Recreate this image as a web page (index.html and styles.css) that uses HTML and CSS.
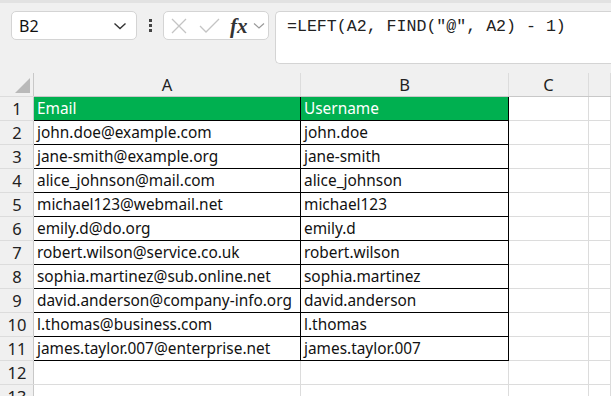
FILE: index.html
```html
<html>
<head>
	<link rel="stylesheet" href="styles.css">
</head>
<body>
	<div class="toolbar">
		<div class="namebox">
			<span>B2</span>
			<svg width="14" height="8" viewBox="0 0 14 8"><path d="M1.5 1.5 L7 6.5 L12.5 1.5" fill="none" stroke="#333" stroke-width="1.4"/></svg>
		</div>
		<div class="dots"><i></i><i></i><i></i></div>
		<div class="fxbox">
			<svg class="ico-x" width="16" height="16" viewBox="0 0 16 16"><path d="M1 1 L15 15 M15 1 L1 15" stroke="#c4c4c4" stroke-width="1.3"/></svg>
			<svg class="ico-ok" width="21" height="16" viewBox="0 0 21 16"><path d="M1 8 L7 14 L20 1" fill="none" stroke="#c4c4c4" stroke-width="1.3"/></svg>
			<span class="fx">fx</span>
			<svg width="12" height="8" viewBox="0 0 12 8"><path d="M1 1.5 L6 6 L11 1.5" fill="none" stroke="#999" stroke-width="1.2"/></svg>
		</div>
		<div class="formula">=LEFT(A2, FIND("@", A2) - 1)</div>
	</div>
	<table class="sheet">
		<colgroup>
			<col class="c-row"><col class="c-a"><col class="c-b"><col class="c-c"><col>
		</colgroup>
		<tr class="heads">
			<th class="corner"><div class="tri"></div></th>
			<th>A</th><th>B</th><th>C</th><th></th>
		</tr>
		<tr class="title"><th>1</th><td class="d">Email</td><td class="d">Username</td><td></td><td></td></tr>
		<tr><th>2</th><td class="d">john.doe@example.com</td><td class="d">john.doe</td><td></td><td></td></tr>
		<tr><th>3</th><td class="d">jane-smith@example.org</td><td class="d">jane-smith</td><td></td><td></td></tr>
		<tr><th>4</th><td class="d">alice_johnson@mail.com</td><td class="d">alice_johnson</td><td></td><td></td></tr>
		<tr><th>5</th><td class="d">michael123@webmail.net</td><td class="d">michael123</td><td></td><td></td></tr>
		<tr><th>6</th><td class="d">emily.d@do.org</td><td class="d">emily.d</td><td></td><td></td></tr>
		<tr><th>7</th><td class="d">robert.wilson@service.co.uk</td><td class="d">robert.wilson</td><td></td><td></td></tr>
		<tr><th>8</th><td class="d">sophia.martinez@sub.online.net</td><td class="d">sophia.martinez</td><td></td><td></td></tr>
		<tr><th>9</th><td class="d">david.anderson@company-info.org</td><td class="d">david.anderson</td><td></td><td></td></tr>
		<tr><th>10</th><td class="d">l.thomas@business.com</td><td class="d">l.thomas</td><td></td><td></td></tr>
		<tr><th>11</th><td class="d">james.taylor.007@enterprise.net</td><td class="d">james.taylor.007</td><td></td><td></td></tr>
		<tr><th>12</th><td></td><td></td><td></td><td></td></tr>
		<tr><th>13</th><td></td><td></td><td></td><td></td></tr>
	</table>
</body>
</html>
```

FILE: styles.css
```css
html, body {
	margin: 0;
	height: 100%;
	overflow: hidden;
	background: #f0f0f0;
	font-family: "Noto Sans", "Liberation Sans", sans-serif;
	color: #111;
}
.toolbar {
	display: flex;
	align-items: flex-start;
	height: 73px;
	box-sizing: border-box;
	padding: 8px 0 0 11px;
	border-top: 3px solid #e2e2e2;
}
.namebox, .fxbox, .formula {
	background: #fff;
	border: 1px solid #d4d4d4;
	border-radius: 5px;
	box-sizing: border-box;
}
.namebox {
	width: 126px;
	height: 29px;
	display: flex;
	align-items: center;
	justify-content: space-between;
	padding: 0 9px 0 7px;
	font-size: 16px;
}
.dots {
	width: 26px;
	height: 29px;
	display: flex;
	flex-direction: column;
	align-items: center;
	justify-content: center;
	gap: 2px;
}
.dots i {
	display: block;
	width: 3px;
	height: 3px;
	background: #444;
}
.fxbox {
	width: 106px;
	height: 29px;
	display: flex;
	align-items: center;
	padding-left: 7px;
}
.ico-x { margin-right: 12px; }
.ico-ok { margin-right: 10px; }
.fx {
	font-family: "Liberation Serif", serif;
	font-style: italic;
	font-size: 21px;
	font-weight: bold;
	color: #333;
	margin-right: 5px;
	line-height: 20px;
}
.formula {
	margin-left: 6px;
	flex: 1;
	height: 53px;
	border-right: none;
	border-radius: 5px 0 0 5px;
	padding: 5px 0 0 11px;
	font-family: "Liberation Mono", monospace;
	font-size: 16.6px;
	color: #222;
}
.sheet {
	border-collapse: collapse;
	table-layout: fixed;
	width: 611px;
	font-size: 15.4px;
}
.c-row { width: 33px; }
.c-a { width: 267px; }
.c-b { width: 208px; }
.c-c { width: 80px; }
.sheet th, .sheet td {
	padding: 0;
	height: 24px;
	border: 1px solid #dcdcdc;
	white-space: nowrap;
	overflow: hidden;
}
.sheet td {
	background: #fff;
	padding: 0 0 0 3px;
	vertical-align: bottom;
	line-height: 22px;
}
.sheet th {
	font-weight: normal;
	background: #f0f0f0;
	font-size: 16.5px;
	color: #222;
}
.sheet tr > th:first-child {
	border-color: #dcdcdc #c8c8c8 #dcdcdc #f0f0f0;
}
.heads th {
	height: 22px;
	border-top: none;
	border-bottom-color: #c8c8c8;
}
.heads th.corner {
	position: relative;
}
.tri {
	position: absolute;
	right: 3px;
	bottom: 3px;
	width: 0;
	height: 0;
	border-left: 15px solid transparent;
	border-bottom: 15px solid #b9b9b9;
}
.sheet td.d {
	border: 1px solid #000;
}
.title td.d {
	background: #00b050;
	color: #fff;
}
```
